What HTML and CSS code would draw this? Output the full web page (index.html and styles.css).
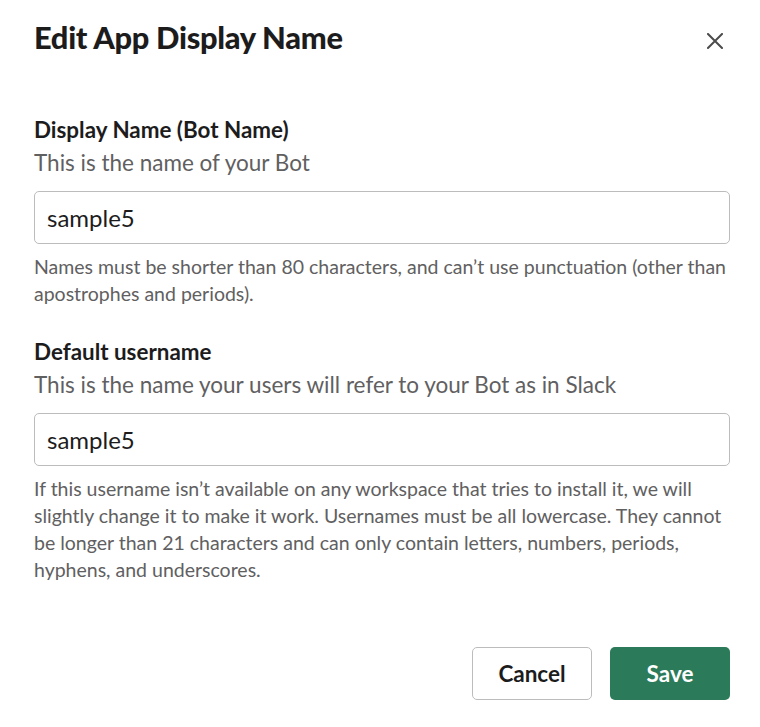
FILE: index.html
```html
<!DOCTYPE html>
<html lang="en">
<head>
<meta charset="utf-8">
<title>Edit App Display Name</title>
<link rel="stylesheet" href="styles.css">
</head>
<body>
<div class="modal">
  <div class="modal-header">
    <h1 class="modal-title">Edit App Display Name</h1>
    <button class="close-btn" aria-label="Close">
      <svg width="16" height="16" viewBox="0 0 16 16"><path d="M1 1 L15 15 M15 1 L1 15" stroke="#4d4c4d" stroke-width="2" stroke-linecap="square" fill="none"/></svg>
    </button>
  </div>

  <div class="field field-first">
    <label class="field-label">Display Name (Bot Name)</label>
    <div class="field-desc">This is the name of your Bot</div>
    <div class="input">sample5</div>
    <div class="field-hint">Names must be shorter than 80 characters, and can’t use punctuation (other than apostrophes and periods).</div>
  </div>

  <div class="field field-second">
    <label class="field-label">Default username</label>
    <div class="field-desc">This is the name your users will refer to your Bot as in Slack</div>
    <div class="input">sample5</div>
    <div class="field-hint">If this username isn’t available on any workspace that tries to install it, we will slightly change it to make it work. Usernames must be all lowercase. They cannot be longer than 21 characters and can only contain letters, numbers, periods, hyphens, and underscores.</div>
  </div>

  <div class="modal-footer">
    <button class="btn btn-secondary">Cancel</button>
    <button class="btn btn-primary">Save</button>
  </div>
</div>
</body>
</html>
```

FILE: styles.css
```css
* { box-sizing: border-box; }
html, body { margin: 0; padding: 0; background: #ffffff; }
body {
  font-family: Lato, "Noto Sans", sans-serif;
  color: #1d1c1d;
}
.modal {
  width: 760px;
  padding: 20px 30px 0 34px;
}
.modal-header {
  display: flex;
  align-items: center;
  justify-content: space-between;
  height: 36px;
}
.modal-title {
  margin: 0;
  font-size: 30.8px;
  font-weight: 900;
  line-height: 36px;
  letter-spacing: -0.3px;
  color: #1d1c1d;
}
.close-btn {
  align-self: flex-start;
  width: 16px;
  height: 16px;
  padding: 0;
  margin: 13px 7px 0 0;
  border: 0;
  background: none;
  display: flex;
}
.field-first { margin-top: 59px; }
.field-second { margin-top: 30.5px; }
.field-label {
  display: block;
  font-size: 22.4px;
  font-weight: 700;
  line-height: 30px;
  color: #1d1c1d;
}
.field-desc {
  margin-top: 3px;
  font-size: 22.5px;
  line-height: 30px;
  color: #616061;
}
.input {
  margin-top: 13px;
  height: 53px;
  border: 1px solid #bcbcbc;
  border-radius: 5px;
  padding: 0 12px;
  display: flex;
  align-items: center;
  font-size: 24px;
  color: #1d1c1d;
}
.field-hint {
  margin-top: 8.5px;
  font-size: 19.5px;
  line-height: 27px;
  color: #616061;
}
.modal-footer {
  margin-top: 64.5px;
  display: flex;
  justify-content: flex-end;
  gap: 18px;
}
.btn {
  width: 120px;
  height: 53px;
  border-radius: 5px;
  font-family: Lato, "Noto Sans", sans-serif;
  font-size: 22.5px;
  font-weight: 700;
  padding: 0;
}
.btn-secondary {
  background: #ffffff;
  border: 1px solid #bcbcbc;
  color: #1d1c1d;
}
.btn-primary {
  background: #2b7a59;
  border: 0;
  color: #ffffff;
}
```
